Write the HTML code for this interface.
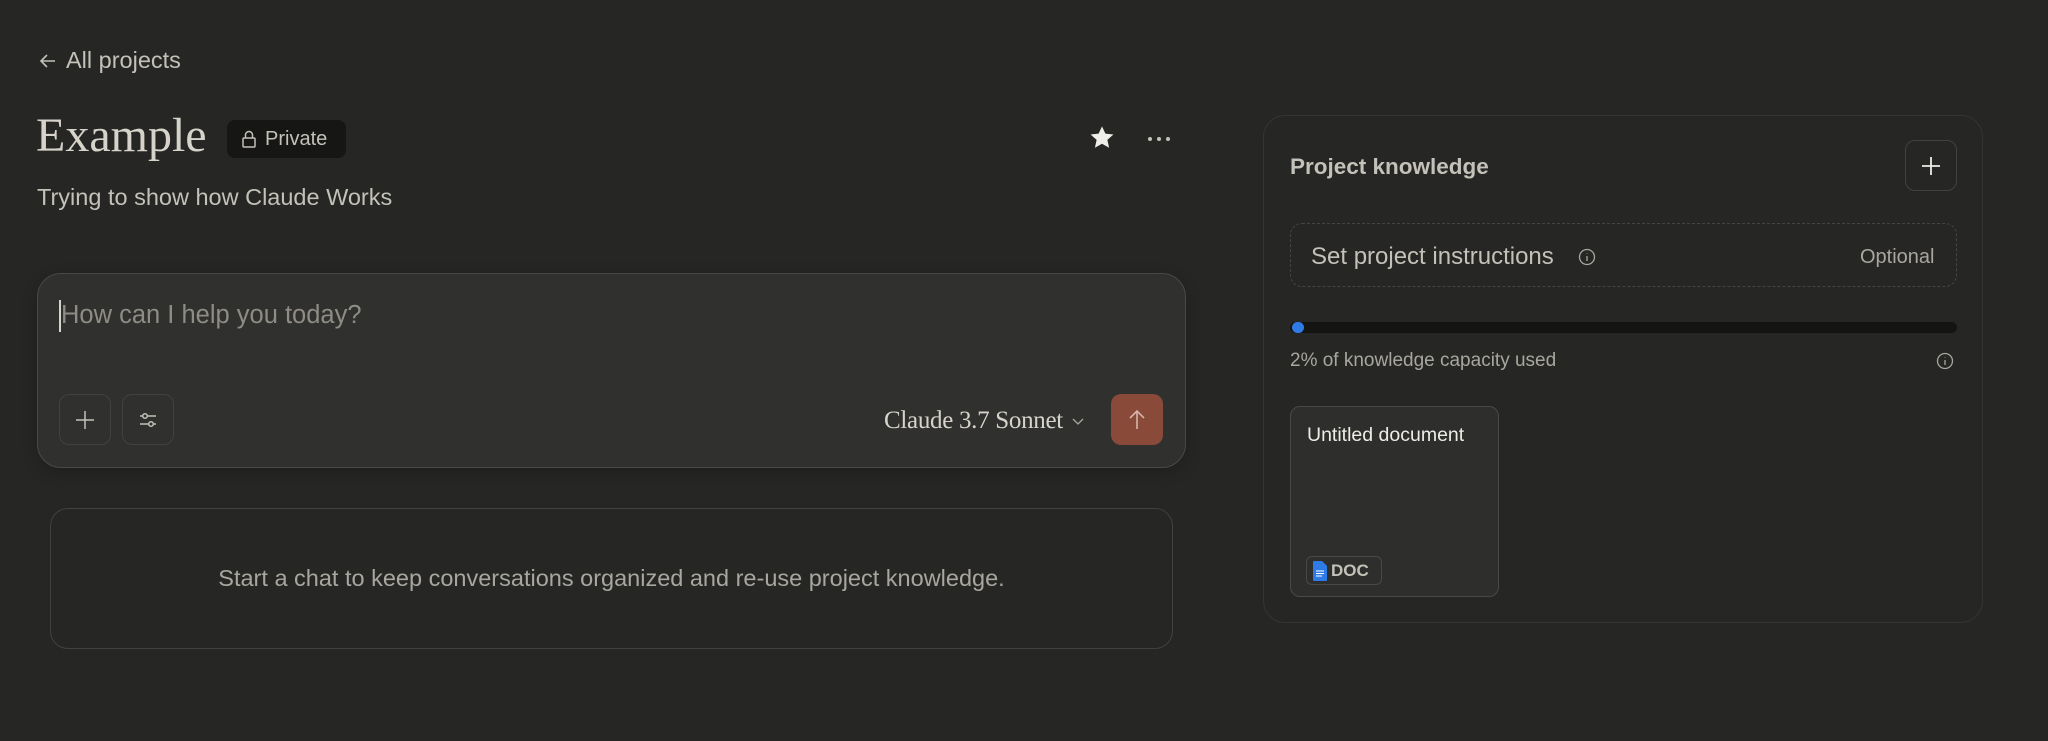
<!DOCTYPE html>
<html><head><meta charset="utf-8"><style>
*{box-sizing:border-box;margin:0;padding:0}
body{width:2048px;height:741px;background:#262624;font-family:"Liberation Sans",sans-serif;color:#c3c1b8;position:relative;overflow:hidden}
.a{position:absolute}
.serif{font-family:"Liberation Serif",serif}
</style></head><body>
<div class="a" style="left:38px;top:47px;font-size:23.5px;display:flex;align-items:center;gap:8px;color:#c3c1b8">
<svg width="20" height="20" viewBox="0 0 20 20" fill="none" stroke="#c3c1b8" stroke-width="1.6"><path d="M17 10H3M9 4L3 10l6 6"/></svg>All projects</div>

<div class="a serif" style="left:36px;top:108px;font-size:48px;color:#d6d3ca">Example</div>
<div class="a" style="left:227px;top:120px;width:119px;height:38px;background:#161615;border-radius:8px;display:flex;align-items:center;gap:8px;padding-left:14px;font-size:20px;color:#c3c1b8">
<svg width="16" height="18" viewBox="0 0 16 18" fill="none" stroke="#c3c1b8" stroke-width="1.5"><rect x="2" y="8" width="12" height="9" rx="1"/><path d="M4.5 8V5a3.5 3.5 0 017 0v3"/></svg>Private</div>
<svg class="a" style="left:1088px;top:124px" width="28" height="28" viewBox="0 0 24 24"><path fill="#f0eee8" d="M12 2l2.9 6.3 6.9.7-5.2 4.6 1.5 6.8L12 16.9 5.9 20.4l1.5-6.8L2.2 9l6.9-.7z"/></svg>
<div class="a" style="left:1148px;top:137px;display:flex;gap:5px"><i style="width:4px;height:4px;border-radius:50%;background:#c3c1b8"></i><i style="width:4px;height:4px;border-radius:50%;background:#c3c1b8"></i><i style="width:4px;height:4px;border-radius:50%;background:#c3c1b8"></i></div>
<div class="a" style="left:37px;top:184px;font-size:23.5px;color:#c3c1b8">Trying to show how Claude Works</div>

<div class="a" style="left:37px;top:273px;width:1149px;height:195px;background:#30302e;border:1px solid #4a4945;border-radius:24px;box-shadow:0 4px 16px rgba(0,0,0,.2)"></div>
<div class="a" style="left:59px;top:300px;width:2px;height:32px;background:#d6d3ca"></div>
<div class="a" style="left:61px;top:301px;font-size:25.5px;color:#8e8c85">How can I help you today?</div>
<div class="a" style="left:59px;top:394px;width:52px;height:51px;border:1px solid #42413d;border-radius:10px;display:flex;align-items:center;justify-content:center"><svg width="22" height="22" viewBox="0 0 22 22" stroke="#c3c1b8" stroke-width="1.5"><path d="M11 2v18M2 11h18"/></svg></div>
<div class="a" style="left:122px;top:394px;width:52px;height:51px;border:1px solid #42413d;border-radius:10px;display:flex;align-items:center;justify-content:center"><svg width="22" height="22" viewBox="0 0 22 22" fill="none" stroke="#c3c1b8" stroke-width="1.5"><path d="M3 7h16M3 15h16"/><circle cx="8" cy="7" r="2.3" fill="#30302e"/><circle cx="14" cy="15" r="2.3" fill="#30302e"/></svg></div>
<div class="a serif" style="left:884px;top:407px;font-size:25px;color:#d6d3ca;letter-spacing:-0.3px">Claude 3.7 Sonnet</div>
<svg class="a" style="left:1071px;top:414px" width="14" height="14" viewBox="0 0 14 14" fill="none" stroke="#a8a69f" stroke-width="1.3"><path d="M2 5l5 5 5-5"/></svg>
<div class="a" style="left:1111px;top:394px;width:52px;height:51px;background:#8a4a3a;border-radius:10px;display:flex;align-items:center;justify-content:center"><svg width="22" height="24" viewBox="0 0 22 24" fill="none" stroke="#d5b3a8" stroke-width="1.6"><path d="M11 21V3M4 10l7-7 7 7"/></svg></div>

<div class="a" style="left:50px;top:508px;width:1123px;height:141px;border:1px solid #42413d;border-radius:18px;display:flex;align-items:center;justify-content:center;font-size:23.5px;color:#a8a69f">Start a chat to keep conversations organized and re-use project knowledge.</div>

<div class="a" style="left:1263px;top:115px;width:720px;height:508px;border:1px solid #363532;border-radius:22px;background:#262624"></div>
<div class="a" style="left:1290px;top:154px;font-size:22.5px;font-weight:bold;color:#c3c1b8">Project knowledge</div>
<div class="a" style="left:1905px;top:140px;width:52px;height:51px;border:1px solid #42413d;border-radius:10px;display:flex;align-items:center;justify-content:center"><svg width="22" height="22" viewBox="0 0 22 22" stroke="#eeece6" stroke-width="1.8"><path d="M11 2v18M2 11h18"/></svg></div>
<div class="a" style="left:1290px;top:223px;width:667px;height:64px;border:1.5px dashed #46453f;border-radius:12px"></div>
<div class="a" style="left:1311px;top:243px;font-size:24px;color:#c3c1b8">Set project instructions</div>
<svg class="a" style="left:1578px;top:248px" width="18" height="18" viewBox="0 0 18 18" fill="none" stroke="#a8a69f" stroke-width="1.3"><circle cx="9" cy="9" r="7.5"/><path d="M9 8v5M9 5.3v.4"/></svg>
<div class="a" style="left:1860px;top:246px;font-size:20px;color:#a8a69f">Optional</div>
<div class="a" style="left:1290px;top:322px;width:667px;height:11px;background:#141413;border-radius:6px"></div>
<div class="a" style="left:1292px;top:322px;width:12px;height:11px;background:#2f7be6;border-radius:6px"></div>
<div class="a" style="left:1290px;top:350px;font-size:19px;color:#a8a69f">2% of knowledge capacity used</div>
<svg class="a" style="left:1936px;top:352px" width="18" height="18" viewBox="0 0 18 18" fill="none" stroke="#a8a69f" stroke-width="1.3"><circle cx="9" cy="9" r="7.5"/><path d="M9 8v5M9 5.3v.4"/></svg>
<div class="a" style="left:1290px;top:406px;width:209px;height:191px;background:#2e2e2c;border:1px solid #4a4945;border-radius:10px"></div>
<div class="a" style="left:1307px;top:424px;font-size:19.5px;color:#eeece6">Untitled document</div>
<div class="a" style="left:1306px;top:556px;width:76px;height:29px;border:1px solid #4a4945;border-radius:6px;display:flex;align-items:center;gap:4px;padding-left:6px;font-size:17px;font-weight:bold;color:#c3c1b8">
<svg width="14" height="20" viewBox="0 0 14 20"><path d="M0 1a1 1 0 011-1h8l5 5v14a1 1 0 01-1 1H1a1 1 0 01-1-1z" fill="#2f7be6"/><path d="M3 10h8M3 12.5h8M3 15h6" stroke="#fff" stroke-width="1"/></svg>DOC</div>
</body></html>
